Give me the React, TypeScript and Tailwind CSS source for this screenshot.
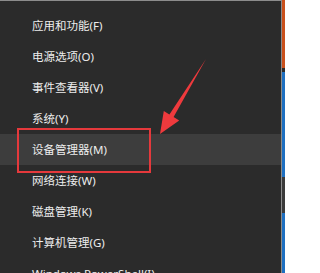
const items = [
  "应用和功能(F)",
  "电源选项(O)",
  "事件查看器(V)",
  "系统(Y)",
  "设备管理器(M)",
  "网络连接(W)",
  "磁盘管理(K)",
  "计算机管理(G)",
  "Windows PowerShell(I)",
];

export default function App() {
  return (
    <div className="flex h-[273px] w-[285px] overflow-hidden bg-[#2b2b2b]">
      <div className="relative h-full w-[282px] border-r border-t border-[#8c8c8c] bg-[#2b2b2b] pt-[9px] font-['Noto_Sans','Noto_Sans_CJK_SC',sans-serif] text-[11.5px] text-[#ededed]">
        {items.map((label, i) => (
          <div
            key={label}
            className={
              i === 4
                ? "flex h-[31px] items-center bg-[#3d3d3d] pl-[32px]"
                : "flex h-[31px] items-center pl-[32px]"
            }
          >
            {label}
          </div>
        ))}

        {/* red highlight box */}
        <div className="absolute left-[17px] top-[127px] h-[45px] w-[134px] border-2 border-[#e5393c]" />

        {/* red arrow */}
        <svg
          className="absolute left-0 top-0"
          width="282"
          height="273"
          viewBox="0 0 282 273"
        >
          <polygon
            points="160,133 163.8,110 169.4,113.5 206,58 173.6,116 179.2,119.5"
            fill="#ef3a3d"
          />
        </svg>
      </div>
      <div className="flex h-full w-[3px] flex-col">
        <div className="h-[68px] bg-[#c9501c]" />
        <div className="h-[4px] bg-[#2b2b2b]" />
        <div className="h-[105px] bg-[#1e6fc0]" />
        <div className="h-[36px] bg-[#3a3a3a]" />
        <div className="flex-1 bg-[#1e6fc0]" />
      </div>
    </div>
  );
}
